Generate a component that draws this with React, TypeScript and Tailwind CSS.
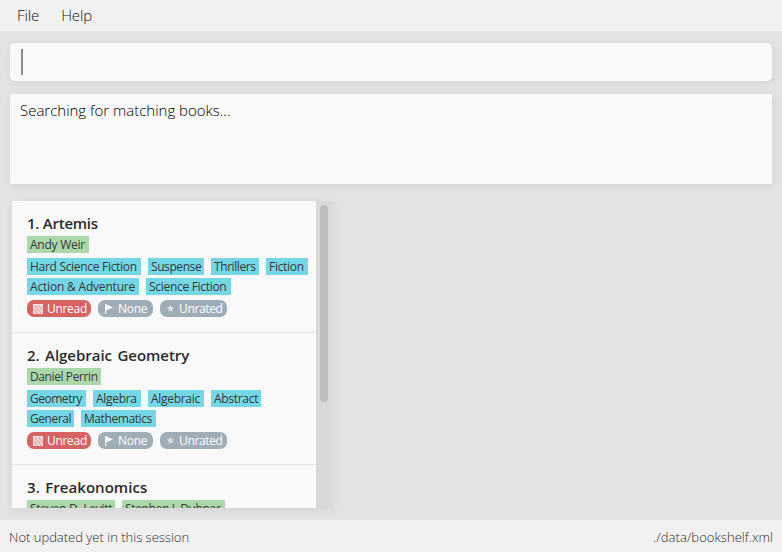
import React from "react";

type Label = { text: string; width: string; tracking?: string };
type Book = {
  title: string;
  titleSpacing: string;
  authors: Label[];
  categories: Label[][];
};

const books: Book[] = [
  {
    title: "1. Artemis",
    titleSpacing: "tracking-[-0.25px]",
    authors: [{ text: "Andy Weir", width: "w-[62px]", tracking: "tracking-[-0.25px]" }],
    categories: [
      [
        { text: "Hard Science Fiction", width: "w-[114px]" },
        { text: "Suspense", width: "w-[56px]", tracking: "tracking-[-0.42px]" },
        { text: "Thrillers", width: "w-[48px]", tracking: "tracking-[-0.42px]" },
        { text: "Fiction", width: "w-[42px]" },
      ],
      [
        { text: "Action & Adventure", width: "w-[112px]", tracking: "tracking-[-0.19px]" },
        { text: "Science Fiction", width: "w-[85px]" },
      ],
    ],
  },
  {
    title: "2. Algebraic Geometry",
    titleSpacing: "tracking-[-0.02px] [word-spacing:1.5px]",
    authors: [{ text: "Daniel Perrin", width: "w-[74px]", tracking: "tracking-[-0.4px]" }],
    categories: [
      [
        { text: "Geometry", width: "w-[59px]", tracking: "tracking-[-0.48px]" },
        { text: "Algebra", width: "w-[48px]" },
        { text: "Algebraic", width: "w-[56px]" },
        { text: "Abstract", width: "w-[50px]" },
      ],
      [
        { text: "General", width: "w-[47px]", tracking: "tracking-[-0.42px]" },
        { text: "Mathematics", width: "w-[75px]", tracking: "tracking-[-0.42px]" },
      ],
    ],
  },
  {
    title: "3. Freakonomics",
    titleSpacing: "tracking-[0.05px] [word-spacing:1.5px]",
    authors: [
      { text: "Steven D. Levitt", width: "w-[88px]", tracking: "tracking-[-0.25px]" },
      { text: "Stephen J. Dubner", width: "w-[103px]", tracking: "tracking-[-0.35px]" },
    ],
    categories: [],
  },
];

function Tag({ label, color }: { label: Label; color: string }) {
  return (
    <span className={`block h-[17px] shrink-0 pl-[3px] text-[12px] leading-[17px] whitespace-nowrap text-[#383838] ${label.tracking ?? "tracking-[-0.3px]"} ${label.width} ${color}`}>
      {label.text}
    </span>
  );
}

function UnreadIcon() {
  return (
    <svg width="10" height="10" viewBox="0 0 10 10" className="shrink-0">
      <rect width="10" height="10" fill="#fff" fillOpacity="0.72" />
      <path d="M5 0.5l4.5 5.5M2 1.5l6 7.5M1 5l3.5 4.5" stroke="#d76262" strokeWidth="0.7" strokeOpacity="0.8" />
      <path d="M0 0h1v10H0zM0 0h10v1H0z" fill="#fff" fillOpacity="0.5" />
    </svg>
  );
}

function FlagIcon() {
  return (
    <svg width="8" height="10" viewBox="0 0 8 10" className="shrink-0">
      <path d="M0 0h1.3v10H0z" fill="#fff" fillOpacity="0.85" />
      <path d="M1 0.2L8 3.4L1 6.3z" fill="#fff" />
    </svg>
  );
}

function StarIcon() {
  return (
    <svg width="7" height="7" viewBox="0 0 7 7" className="shrink-0">
      <path d="M3.5 0l.8 2.4H7L4.9 4l.8 2.7-2.2-1.6-2.2 1.6.8-2.7L0 2.4h2.7z" fill="#fff" fillOpacity="0.95" />
      <circle cx="3.5" cy="3.6" r="0.7" fill="#9eadb6" />
    </svg>
  );
}

function Pills() {
  const base = "flex h-[17px] shrink-0 items-center rounded-[7px] text-[12px] leading-[17px] text-white";
  return (
    <div className="mt-[5px] flex gap-[7px]">
      <span className={`${base} w-[64px] gap-[4px] bg-[#d76262] pl-[6px] tracking-[-0.3px]`}>
        <UnreadIcon />
        Unread
      </span>
      <span className={`${base} w-[55px] gap-[5px] bg-[#9eadb6] pl-[7px] tracking-[-0.3px]`}>
        <FlagIcon />
        None
      </span>
      <span className={`${base} w-[67px] gap-[5px] bg-[#9eadb6] pl-[7px] tracking-[-0.35px]`}>
        <StarIcon />
        Unrated
      </span>
    </div>
  );
}

function BookCard({ book }: { book: Book }) {
  return (
    <article className="h-[132px] shrink-0 border-b border-[#e4e4e4] pt-[11px] pl-[15px]">
      <h2 className={`h-[24px] text-[15px] leading-[22px] font-semibold text-[#2b2b2b] ${book.titleSpacing}`}>{book.title}</h2>
      <div className="flex gap-[7px]">
        {book.authors.map((a) => (
          <Tag key={a.text} label={a} color="bg-[#aad8a9]" />
        ))}
      </div>
      {book.categories.length > 0 && (
        <>
          <div className="mt-[5px] flex flex-col gap-[3px]">
            {book.categories.map((row, i) => (
              <div key={i} className="flex gap-[7px]">
                {row.map((c) => (
                  <Tag key={c.text} label={c} color="bg-[#74d7e5]" />
                ))}
              </div>
            ))}
          </div>
          <Pills />
        </>
      )}
    </article>
  );
}

export default function App() {
  return (
    <div className="flex h-[552px] w-[782px] flex-col overflow-hidden bg-[#e3e3e3] font-['Open_Sans','Noto_Sans',sans-serif]">
      <nav className="flex h-[31px] shrink-0 gap-[22px] bg-[#f1f1f1] pl-[17px] text-[15px] leading-[31px] font-light text-[#111]">
        <span className="tracking-[-0.1px]">File</span>
        <span className="tracking-[-0.1px]">Help</span>
      </nav>
      <main className="flex h-[489px] shrink-0 flex-col">
        <div className="mx-[10px] mt-[12px] flex h-[38px] shrink-0 items-center rounded-[5px] bg-[#f9f9f9] pl-[11px] shadow-[1px_2px_9px_rgba(0,0,0,0.07)]">
          <span className="-mt-px h-[26px] w-[2px] bg-[#8b8b8b]" />
        </div>
        <div className="mx-[10px] mt-[13px] h-[90px] shrink-0 bg-[#f9f9f9] pt-[5px] pl-[10px] text-[15px] leading-[22px] font-light tracking-[-0.01px] text-black shadow-[1px_2px_9px_rgba(0,0,0,0.07)]">
          Searching for matching books...
        </div>
        <section className="mt-[17px] ml-[12px] flex h-[307px] w-[320px] shrink-0 shadow-[1px_2px_9px_rgba(0,0,0,0.07)]">
          <div className="flex w-[304px] flex-col overflow-hidden bg-[#f9f9f9]">
            {books.map((b) => (
              <BookCard key={b.title} book={b} />
            ))}
          </div>
          <div className="w-[16px] bg-[#d9d9d9] px-[4px] pt-[4px]">
            <div className="h-[197px] rounded-full bg-[#bdbdbd]" />
          </div>
        </section>
      </main>
      <footer className="flex h-[32px] shrink-0 justify-between bg-[#f1f1f1] pr-[9px] pl-[9px] text-[13px] leading-[34px] font-light text-[#2b2b2b]">
        <span>Not updated yet in this session</span>
        <span className="tracking-[0.05px]">./data/bookshelf.xml</span>
      </footer>
    </div>
  );
}
